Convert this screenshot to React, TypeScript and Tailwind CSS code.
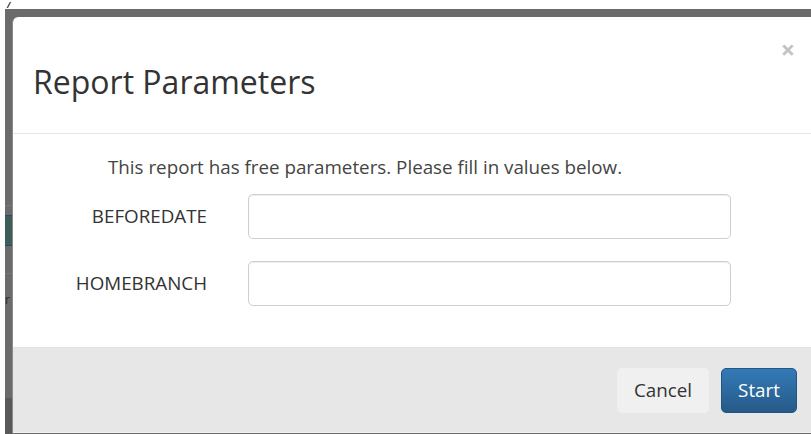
import React from "react";

function StripSegment({ h, className }: { h: number; className: string }) {
  return <div className={className} style={{ height: h }} />;
}

export default function App() {
  return (
    <div
      className="w-[811px] h-[434px] overflow-hidden bg-white relative"
      style={{ fontFamily: '"Open Sans", "Liberation Sans", sans-serif' }}
    >
      {/* page text peeking above the backdrop */}
      <div className="absolute left-[7px] top-0 text-[8px] italic font-bold text-[#222] leading-[9px]">/</div>

      <div className="pt-[9px] pl-[5px] h-full">
        <div className="bg-[#6a6a6a] h-full flex flex-col">
          <div className="h-[8px] shrink-0 bg-[#6b6b6b]" />
          <div className="flex flex-1 min-h-0">
            {/* background page column seen through the backdrop */}
            <div className="w-[7px] shrink-0 flex flex-col">
              <StripSegment h={188} className="bg-[#6b6b6b]" />
              <StripSegment h={1} className="bg-[#777777]" />
              <StripSegment h={9} className="bg-[#6b6b6b]" />
              <StripSegment h={1} className="bg-[#2c4a66]" />
              <StripSegment h={29} className="bg-[#3e5c58]" />
              <StripSegment h={1} className="bg-[#2c4a66]" />
              <StripSegment h={27} className="bg-[#6b6b6b]" />
              <StripSegment h={1} className="bg-[#777777]" />
              <div className="h-[18px] bg-[#6b6b6b]" />
              <div className="h-[16px] bg-[#6b6b6b] text-[#2a2a2a] text-[12px] leading-[16px]">r</div>
              <div className="h-[90px] bg-[#6b6b6b]" />
              <div className="flex-1 bg-[#595959]" />
            </div>

            {/* modal */}
            <div className="flex-1 flex flex-col bg-white rounded-tl-[6px] border-l border-[#8a8a8a] h-[416px]">
              <div className="h-[117px] shrink-0 flex justify-between border-b border-[#e5e5e5] pl-[20px] pr-[16px]">
                <h4 className="self-center text-[32px] leading-[40px] text-[#333333] font-normal mt-[14px]">
                  Report Parameters
                </h4>
                <button className="self-start mt-[20px] text-[#c3c3c3] text-[25px] font-bold leading-none">
                  ×
                </button>
              </div>

              <div className="flex-1 pt-[20px]">
                <p className="ml-[95px] text-[18.8px] leading-[26px] text-[#444444]">
                  This report has free parameters. Please fill in values below.
                </p>
                <div className="mt-[14px] flex flex-col gap-[22px]">
                  {["BEFOREDATE", "HOMEBRANCH"].map((name) => (
                    <div key={name} className="flex items-center">
                      <label className="w-[194px] text-right text-[18.8px] text-[#333333]">{name}</label>
                      <input
                        className="ml-[41px] w-[483px] h-[45px] rounded-[5px] border border-[#cfcfcf] bg-white shadow-[inset_0_1px_1px_rgba(0,0,0,0.075)] outline-none"
                        type="text"
                      />
                    </div>
                  ))}
                </div>
              </div>

              <div className="h-[86px] shrink-0 bg-[#e7e7e8] border-t border-[#e2e2e2] border-b border-b-[#f2f2f2] flex items-start justify-end pt-[20px] pr-[14px] gap-[12px]">
                <button className="w-[92px] h-[45px] rounded-[5px] bg-[#f0f0f0] text-[#333333] text-[18.8px]">
                  Cancel
                </button>
                <button className="w-[76px] h-[45px] rounded-[5px] bg-gradient-to-b from-[#337ab7] to-[#265a88] border border-[#245580] text-white text-[18.8px]">
                  Start
                </button>
              </div>
            </div>
          </div>
        </div>
      </div>
    </div>
  );
}
